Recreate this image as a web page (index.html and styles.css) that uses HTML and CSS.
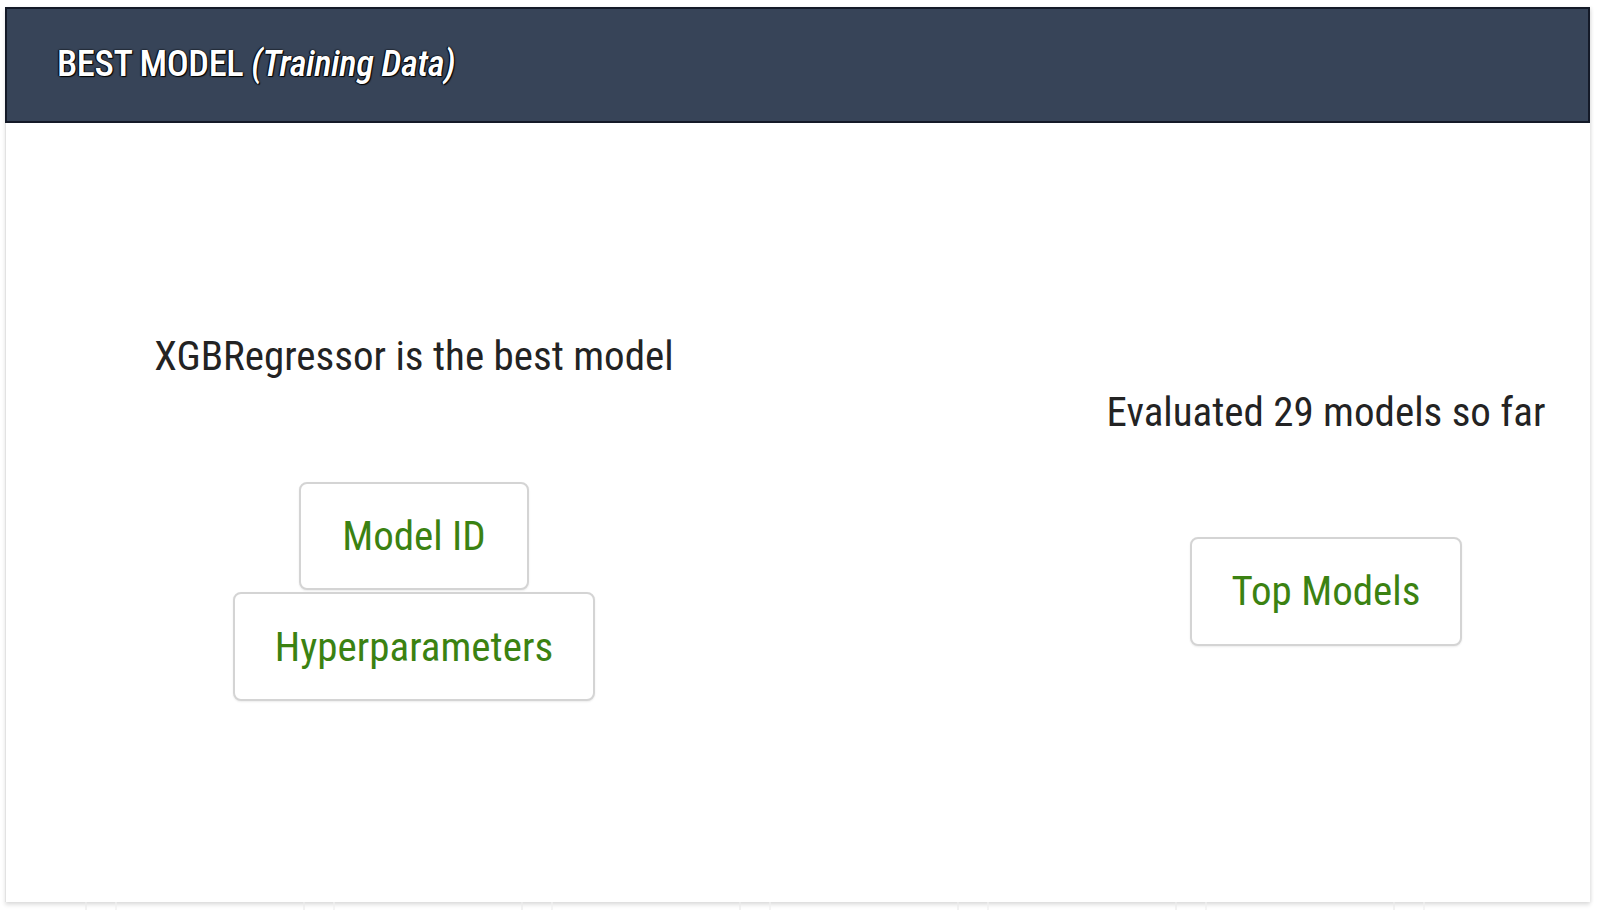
FILE: index.html
```html
<!DOCTYPE html>
<html>
<head>
<meta charset="utf-8">
<link rel="stylesheet" href="styles.css">
</head>
<body>
<div class="page">
  <section class="card">
    <header class="card-header">
      <h2 class="card-title">BEST MODEL <em>(Training Data)</em></h2>
    </header>
    <div class="card-body">
      <div class="col col-left">
        <p class="stat">XGBRegressor is the best model</p>
        <div class="btn-stack">
          <button class="btn btn-model">Model ID</button>
          <button class="btn">Hyperparameters</button>
        </div>
      </div>
      <div class="spacer"></div>
      <div class="col col-right">
        <p class="stat">Evaluated 29 models so far</p>
        <div class="btn-stack btn-stack-right">
          <button class="btn">Top Models</button>
        </div>
      </div>
    </div>
  </section>
  <div class="grid-strip"></div>
</div>
</body>
</html>
```
FILE: styles.css
```css
html, body {
  margin: 0;
  padding: 0;
  background: #ffffff;
}

body {
  font-family: "Roboto Condensed", Roboto, "Liberation Sans", sans-serif;
  color: #222;
  width: 1600px;
  height: 915px;
  overflow: hidden;
}

.page {
  padding: 7px 10px 0 5px;
}

.card {
  width: 1585px;
  height: 895px;
  box-sizing: border-box;
  background: #fff;
  border-left: 1px solid #e2e2e2;
  box-shadow: 0 3px 4px rgba(0, 0, 0, 0.12), 2px 0 3px rgba(0, 0, 0, 0.05);
  display: flex;
  flex-direction: column;
}

.card-header {
  height: 116px;
  box-sizing: border-box;
  background: #374458;
  border: 2px solid #141a28;
  margin-left: -1px;
  display: flex;
  align-items: center;
  padding-left: 50px;
}

.card-title {
  margin: 0 0 3px 0;
  font-size: 36.5px;
  font-weight: 500;
  color: #fff;
  letter-spacing: -0.4px;
  text-shadow: 0 0 2px #000, 1px 1px 1px #000, -1px 0 1px #000;
}

.card-title em {
  font-style: italic;
  font-weight: 500;
}

.card-body {
  flex: 1;
  display: grid;
  grid-template-columns: 816px 1fr 528px;
  padding-top: 8px;
}

.col {
  display: flex;
  flex-direction: column;
  align-items: center;
  justify-content: center;
}

.stat {
  margin: 0;
  font-size: 41px;
  line-height: 48px;
  color: #232323;
  white-space: nowrap;
}

.btn-stack {
  display: flex;
  flex-direction: column;
  align-items: center;
  gap: 2px;
  margin-top: 102px;
}

.btn-stack-right {
  margin-top: 101px;
}

.btn {
  font-family: inherit;
  font-size: 41px;
  font-weight: 400;
  color: #3b8212;
  background: #fff;
  border: 2px solid #d4d4d4;
  border-radius: 8px;
  height: 109px;
  padding: 0 40px;
  box-shadow: 0 1px 2px rgba(0, 0, 0, 0.08);
  cursor: pointer;
}

.btn-model {
  padding: 0 41px;
  height: 108px;
}

.grid-strip {
  height: 8px;
  margin-top: 0;
  background: repeating-linear-gradient(90deg, transparent 0, transparent 80px, #ececec 80px, #ececec 82px, transparent 82px, transparent 110px, #f0f0f0 110px, #f0f0f0 112px, transparent 112px, transparent 218px);
  opacity: 0.7;
}
```
